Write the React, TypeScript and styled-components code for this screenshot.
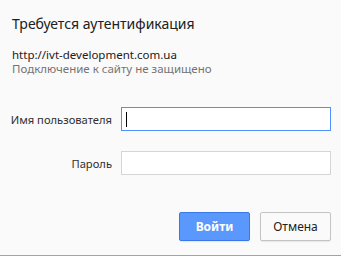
import React from 'react';
import styled, { createGlobalStyle } from 'styled-components';

const GlobalStyle = createGlobalStyle`
  html, body {
    margin: 0;
    padding: 0;
    background: #fafafa;
  }
`;

const Dialog = styled.div`
  width: 341px;
  height: 256px;
  box-sizing: border-box;
  padding: 14px 10px 0 12px;
  border-bottom: 1px solid #a3a3a3;
  background: #fafafa;
  font-family: "Noto Sans", "Open Sans", sans-serif;
  display: flex;
  flex-direction: column;
`;

const Title = styled.h1`
  margin: 0;
  font-size: 14px;
  font-weight: 400;
  line-height: 20px;
  color: #202020;
`;

const Origin = styled.div`
  margin-top: 13px;
  font-size: 11.5px;
  line-height: 15px;
  color: #202020;
`;

const Note = styled.div`
  font-size: 11.5px;
  line-height: 14px;
  color: #747474;
`;

const Form = styled.div`
  margin-top: 31px;
  display: grid;
  grid-template-columns: 100px 210px;
  column-gap: 9px;
  row-gap: 20px;
  align-items: center;
`;

const Label = styled.label`
  justify-self: end;
  font-size: 11.2px;
  color: #303030;
  white-space: nowrap;
`;

const Field = styled.input`
  box-sizing: border-box;
  width: 210px;
  height: 24px;
  margin: 0;
  padding: 0 5px;
  background: #fff;
  border: 1px solid #d5d5d5;
  outline: none;
  font-size: 12px;
  font-family: inherit;
`;

const Caret = styled.span`
  display: inline-block;
  width: 1px;
  height: 15px;
  background: #000;
`;

const FocusBox = styled.div`
  box-sizing: border-box;
  width: 210px;
  height: 24px;
  background: #fff;
  border: 1px solid #4d90fe;
  display: flex;
  align-items: center;
  padding-left: 4px;
`;

const Actions = styled.div`
  margin-top: 37px;
  display: flex;
  justify-content: flex-end;
  gap: 10px;
`;

const Button = styled.button<{ $primary?: boolean }>`
  box-sizing: border-box;
  width: 71px;
  height: 29px;
  border-radius: 2px;
  font-family: inherit;
  font-size: 12px;
  padding: 0;
  cursor: pointer;
  border: 1px solid ${p => (p.$primary ? '#3b78e7' : '#c4c4c4')};
  background: ${p => (p.$primary ? '#5a98fd' : '#fafafa')};
  color: ${p => (p.$primary ? '#fff' : '#222')};
  font-weight: ${p => (p.$primary ? 700 : 400)};
  box-shadow: 0 1px 1px rgba(0, 0, 0, 0.08);
`;

export default function App() {
  return (
    <>
      <GlobalStyle />
      <Dialog>
        <Title>Требуется аутентификация</Title>
        <Origin>http://ivt-development.com.ua</Origin>
        <Note>Подключение к сайту не защищено</Note>
        <Form>
          <Label>Имя пользователя</Label>
          <FocusBox>
            <Caret />
          </FocusBox>
          <Label>Пароль</Label>
          <Field type="password" />
        </Form>
        <Actions>
          <Button $primary>Войти</Button>
          <Button>Отмена</Button>
        </Actions>
      </Dialog>
    </>
  );
}
